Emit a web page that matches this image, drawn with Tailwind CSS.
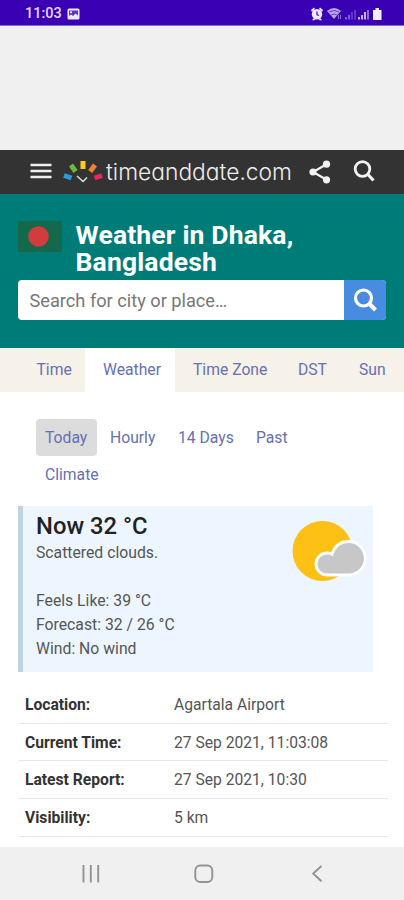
<!DOCTYPE html>
<html lang="en">
<head>
<meta charset="utf-8">
<title>Weather in Dhaka, Bangladesh</title>
<script src="https://cdn.jsdelivr.net/npm/@tailwindcss/browser@4"></script>
</head>
<body class="w-[404px] h-[900px] overflow-hidden bg-white font-['Roboto',sans-serif] text-[15px] text-[#555] flex flex-col">
<div class="h-[26px] shrink-0 bg-[#3a00b4] border-b border-[#8468d0] flex items-center justify-between pl-[25px] pr-[21px] pt-[3px]">
  <div class="flex items-center gap-[5px] text-[14.500px] font-medium text-[#e3d9fa]"><span>11:03</span>
    <svg class="w-[13px] h-[12px]" viewBox="0 0 13 12"><rect x=".5" y=".5" width="12" height="11" rx="1.500" fill="#eee8ff"/><path d="M2 2.500h9v5L8.500 5.500 6 8 4 6.500 2 8z" fill="#5b36c6"/><circle cx="4" cy="4.200" r="1" fill="#fff"/></svg>
  </div>
  <svg class="w-[73px] h-[14px]" viewBox="0 0 73 14">
    <g fill="#eee8ff"><circle cx="7" cy="7.300" r="5.200"/><path d="M1 3l3-2.500 1 1.500-3 3zM13 3l-3-2.500-1 1.500 3 3zM2 13l2-2 1.500 1L4 13.500zM12 13l-2-2-1.500 1L10 13.500z"/></g>
    <path d="M7 4.500v3.200l2 .8" fill="none" stroke="#3a00b4" stroke-width="1.200"/>
    <path d="M17 4q7-6 14 0l-7 8z" fill="#b7a4e8"/><path d="M19 5q5-3 10 0M21 8q3-2 6 0" fill="none" stroke="#6540c8"/>
    <path d="M28.500 8v4M30.500 8v4" stroke="#8c70d8"/>
    <path d="M36 10v2.500M39 8v4.500" stroke="#a791e5" stroke-width="1.300"/><path d="M42 5v7.500M45 3v9.500" stroke="#7652ce" stroke-width="1.300"/>
    <path d="M49 10v2.500M52 8v4.500M55 5v7.500" stroke="#d4c8f5" stroke-width="1.800"/><path d="M58 3v9.500" stroke="#ab94e5" stroke-width="1.500"/>
    <path d="M63 3h2.500V1h3.500v2h2.500v10H63z" fill="#f1edff"/>
  </svg>
</div>
<div class="h-[124px] shrink-0 bg-[#f0f0f0]"></div>
<header class="h-[44px] shrink-0 bg-[#333] flex items-center pl-[30px]">
  <svg class="w-[22px] h-[16px] shrink-0 -mt-[2px]" viewBox="0 0 22 16"><path d="M.5 2h21M.5 8h21M.5 14h21" stroke="#eee" stroke-width="2.300"/></svg>
  <svg class="w-[40px] h-[24px] ml-[11px] shrink-0" viewBox="0 0 40 24">
    <g stroke-width="5"><path d="M1 15.500l7.500 2.500" stroke="#2c9bd6"/><path d="M8 5l4.500 6.500" stroke="#70b83c"/><path d="M20 1v8" stroke="#f5cf20"/><path d="M32 5l-4.800 6.500" stroke="#ec8335"/><path d="M39 15.500L31.500 18" stroke="#e9265f"/></g>
    <path d="M14 16l6 5.500 4-4" fill="none" stroke="#ddd" stroke-width="1.500"/>
  </svg>
  <svg class="w-[188px] h-[32px] ml-[2px] shrink-0" viewBox="0 0 188 32"><text x="1" y="24" textLength="186" lengthAdjust="spacingAndGlyphs" fill="#ededed" class="font-['Inter',sans-serif] font-light text-[23px] [font-feature-settings:'cv11']">timeanddate.com</text></svg>
  <svg class="w-[22px] h-[24px] ml-[16px] shrink-0" viewBox="0 0 22 24"><path d="M18 4L4 12l14 8" fill="none" stroke="#f2f2f2" stroke-width="2.200"/><g fill="#f2f2f2"><circle cx="17.500" cy="4.200" r="3.600"/><circle cx="4" cy="12" r="3.600"/><circle cx="17.500" cy="19.800" r="3.600"/></g></svg>
  <svg class="w-[22px] h-[22px] ml-[22px] -mt-[2px] shrink-0" viewBox="0 0 22 22"><circle cx="9.500" cy="9" r="7.300" fill="none" stroke="#f2f2f2" stroke-width="2.800"/><path d="M14.500 14l6 6.500" stroke="#f2f2f2" stroke-width="3.200"/></svg>
</header>
<section class="h-[154px] shrink-0 bg-[#007c78] px-[18px] pt-[27px]">
  <div class="flex h-[59px]">
    <svg class="w-[44px] h-[31px] shrink-0" viewBox="0 0 44 31"><path fill="#13694a" d="M0 0h44v31H0z"/><circle cx="20.500" cy="15.500" r="10.300" fill="#d33b3e"/></svg>
    <h1 class="ml-[13.500px] text-[26.500px] leading-[27px] tracking-[0.15px] font-bold text-white whitespace-nowrap">Weather in Dhaka,<br>Bangladesh</h1>
  </div>
  <div class="flex h-[40px] w-[368px] rounded-[4px] overflow-hidden bg-white">
    <div class="flex-1 pl-[11.500px] leading-[41px] text-[18.200px] text-[#777] whitespace-nowrap">Search for city or place…</div>
    <div class="w-[42px] bg-[#478ce0] flex items-center justify-center"><svg class="w-[24px] h-[24px]" viewBox="0 0 24 24"><circle cx="10.500" cy="10" r="8" fill="none" stroke="#fff" stroke-width="3.200"/><path d="M16 15.500l6.500 6.500" stroke="#fff" stroke-width="4"/></svg></div>
  </div>
</section>
<nav class="h-[44px] shrink-0 bg-[#f6f2ea] flex text-[15.700px] leading-[44px] text-[#6670b3] whitespace-nowrap">
  <span class="w-[85px] pl-[36.500px]">Time</span><span class="w-[90px] bg-white text-center pl-[4px]">Weather</span><span class="pl-[18px] w-[123px]">Time Zone</span><span class="w-[61px]">DST</span><span>Sun</span>
</nav>
<div class="h-[114px] shrink-0 pt-[27px] pl-[36px] text-[15.700px] leading-[37px] text-[#6670b3] whitespace-nowrap">
  <div class="flex h-[37px]"><span class="w-[61px] h-[37px] leading-[38px] bg-[#dcdcdc] rounded-[4px] pl-[9px]">Today</span><span class="ml-[13px] w-[68px] leading-[38px]">Hourly</span><span class="w-[78px] leading-[38px]">14 Days</span><span class="leading-[38px]">Past</span></div>
  <div class="pl-[9px] leading-[38px]">Climate</div>
</div>
<section class="ml-[18px] w-[355px] h-[166px] shrink-0 bg-[#edf6fe] border-l-[5px] border-[#bfd4de] pl-[13px] flex justify-between">
  <div class="text-[15.750px] leading-[23.700px] whitespace-nowrap">
    <div class="mt-[6px] h-[29px] leading-[29px] text-[23.800px] font-medium text-[#222]">Now 32 °C</div>
    <div>Scattered clouds.</div>
    <div class="mt-[24.500px]">Feels Like: 39 °C</div><div>Forecast: 32 / 26 °C</div><div>Wind: No wind</div>
  </div>
  <svg class="w-[82px] h-[70px] mt-[10px]" viewBox="291 516 82 70"><circle cx="322.500" cy="551" r="30" fill="#fdc116"/><path d="M327 575a11 11 0 0 1 0-22q2.800 0 5 1.200c2.500-7.500 8.300-12.700 16.500-12.700a16.750 16.750 0 0 1 0 33.500z" fill="#c7c7c7" stroke="#fff" stroke-width="2.800"/></svg>
</section>
<dl class="ml-[18px] w-[370px] h-[175px] shrink-0 pt-[14px] text-[15.650px] leading-[37.500px] whitespace-nowrap">
  <div class="flex h-[37.700px] pl-[7px] border-b border-[#e8e8e8]"><dt class="w-[149px] font-bold text-[#333]">Location:</dt><dd>Agartala Airport</dd></div>
  <div class="flex h-[37.700px] pl-[7px] border-b border-[#e8e8e8]"><dt class="w-[149px] font-bold text-[#333]">Current Time:</dt><dd>27 Sep 2021, 11:03:08</dd></div>
  <div class="flex h-[37.700px] pl-[7px] border-b border-[#e8e8e8]"><dt class="w-[149px] font-bold text-[#333]">Latest Report:</dt><dd>27 Sep 2021, 10:30</dd></div>
  <div class="flex h-[37.700px] pl-[7px] border-b border-[#e8e8e8]"><dt class="w-[149px] font-bold text-[#333]">Visibility:</dt><dd>5 km</dd></div>
</dl>
<footer class="h-[53px] shrink-0 bg-[#f0f0f0]">
  <svg class="w-[404px] h-[53px]" viewBox="0 0 404 53" fill="none" stroke="#929292"><path d="M83.500 18v17.500M90.800 18v17.500M98.200 18v17.500" stroke-width="1.900"/><rect x="195.300" y="18.500" width="17" height="16.500" rx="5" stroke-width="1.900"/><path d="M321.500 19l-8.300 7.500 8.300 7.700" stroke-width="1.900"/></svg>
</footer>
</body>
</html>
